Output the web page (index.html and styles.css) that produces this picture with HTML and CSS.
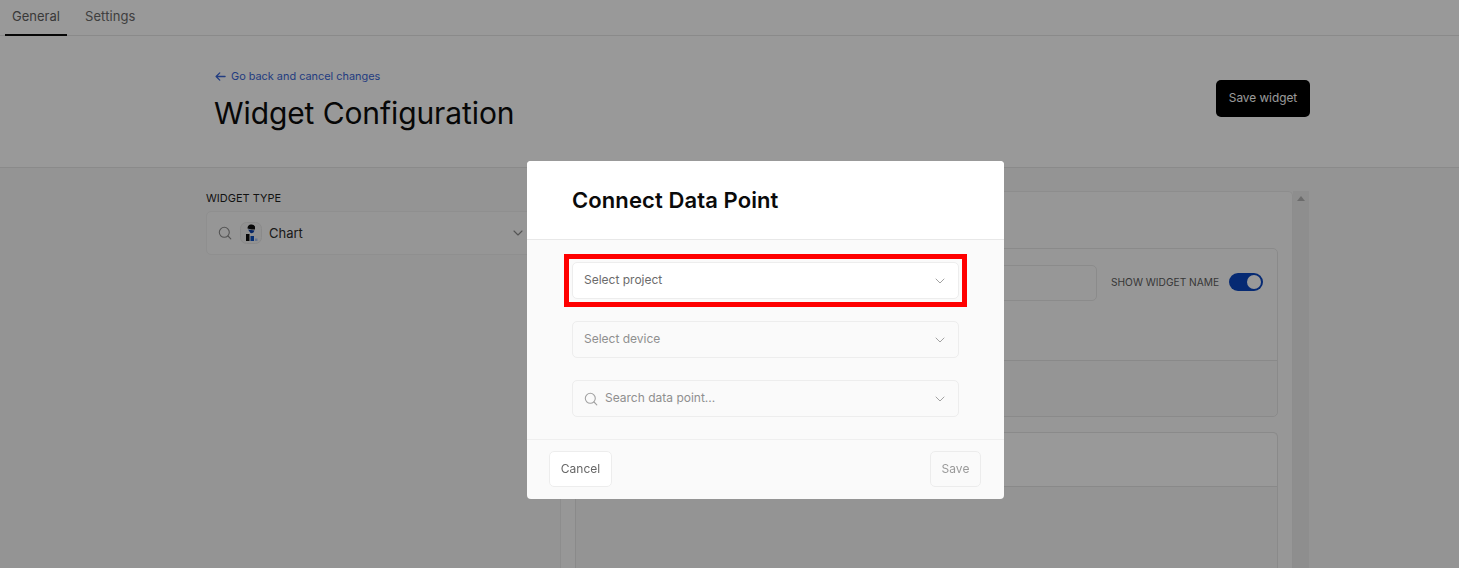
FILE: index.html
```html
<!DOCTYPE html>
<html lang="en">
<head>
<meta charset="utf-8">
<title>Widget Configuration</title>
<link rel="stylesheet" href="styles.css">
</head>
<body>
<div class="page">
  <nav class="tabs">
    <a class="tab tab-active">General</a>
    <a class="tab">Settings</a>
  </nav>
  <header class="head">
    <div class="head-left">
      <a class="back">
        <svg class="back-icon" viewBox="0 0 12 12" width="11" height="11"><path d="M11 6H1.2M5.200 2 1.200 6l4 4" fill="none" stroke="currentColor" stroke-width="1.400" stroke-linecap="round" stroke-linejoin="round"/></svg>
        Go back and cancel changes
      </a>
      <h1 class="title">Widget Configuration</h1>
    </div>
    <button class="btn-dark">Save widget</button>
  </header>
  <main class="content">
    <section class="left">
      <div class="label">WIDGET TYPE</div>
      <div class="type-select">
        <svg class="icon-search" viewBox="0 0 14 14" width="14" height="14"><circle cx="6.3" cy="6.3" r="5" fill="none" stroke="currentColor" stroke-width="1.1"/><path d="M10 10l2.8 2.8" stroke="currentColor" stroke-width="1.1" stroke-linecap="round"/></svg>
        <span class="type-icon">
          <svg viewBox="0 0 22 22" width="22" height="22"><rect x=".5" y=".5" width="21" height="21" rx="6" fill="#f4f4f4" stroke="#e6e6e6"/><path d="M7.500 6.500a4 4 0 0 1 7.500-2v3h-3.500z" fill="#0d0d0d"/><path d="M8 7.500l6.500 1a3.300 3.300 0 0 1-4 2.500z" fill="#0a3fa8"/><rect x="6" y="12" width="3.500" height="7" fill="#0d0d0d"/><rect x="10.500" y="14" width="3.500" height="5" fill="#0a4fc0"/><rect x="15" y="16.500" width="2.500" height="2.500" fill="#a9c4ee"/></svg>
        </span>
        <span class="type-name">Chart</span>
        <svg class="chev" viewBox="0 0 10 6" width="10" height="6"><path d="M1 1l4 4 4-4" fill="none" stroke="currentColor" stroke-width="1.1" stroke-linecap="round" stroke-linejoin="round"/></svg>
      </div>
    </section>
    <section class="right">
      <div class="panel">
        <div class="card card-a">
          <div class="card-row">
            <div class="name-input"></div>
            <span class="show-label">SHOW WIDGET NAME</span>
            <span class="toggle"><span class="knob"></span></span>
          </div>
          <div class="card-foot"></div>
        </div>
        <div class="card card-b">
          <div class="card-b-head"></div>
        </div>
      </div>
      <div class="scroll"><span class="scroll-up"></span></div>
    </section>
  </main>
</div>

<div class="overlay"></div>

<div class="modal">
  <div class="modal-head"><h2 class="modal-title">Connect Data Point</h2></div>
  <div class="modal-body">
    <div class="field field-on">
      <span class="field-text">Select project</span>
      <svg class="chev" viewBox="0 0 10 6" width="10" height="6"><path d="M1 1l4 4 4-4" fill="none" stroke="currentColor" stroke-width="1" stroke-linecap="round" stroke-linejoin="round"/></svg>
    </div>
    <div class="field">
      <span class="field-text">Select device</span>
      <svg class="chev" viewBox="0 0 10 6" width="10" height="6"><path d="M1 1l4 4 4-4" fill="none" stroke="currentColor" stroke-width="1" stroke-linecap="round" stroke-linejoin="round"/></svg>
    </div>
    <div class="field">
      <svg class="field-search" viewBox="0 0 14 14" width="14" height="14"><circle cx="6.300" cy="6.300" r="5" fill="none" stroke="currentColor" stroke-width="1.100"/><path d="M10 10l2.800 2.800" stroke="currentColor" stroke-width="1.100" stroke-linecap="round"/></svg>
      <span class="field-text">Search data point...</span>
      <svg class="chev" viewBox="0 0 10 6" width="10" height="6"><path d="M1 1l4 4 4-4" fill="none" stroke="currentColor" stroke-width="1" stroke-linecap="round" stroke-linejoin="round"/></svg>
    </div>
  </div>
  <div class="modal-foot">
    <button class="btn-light">Cancel</button>
    <button class="btn-off">Save</button>
  </div>
  <div class="highlight"></div>
</div>
</body>
</html>
```
FILE: styles.css
```css
* { box-sizing: border-box; }
html, body { margin: 0; height: 100%; overflow: hidden; }
body { font-family: Inter, "Liberation Sans", sans-serif; background: #f7f7f7; color: #111; }
.page { height: 568px; display: flex; flex-direction: column; overflow: hidden; }

.tabs { height: 36px; flex: none; display: flex; gap: 4px; padding-left: 5px; background: #fff; border-bottom: 1px solid #e6e6e6; }
.tab { height: 36px; padding: 8px 7px 0; font-size: 13px; line-height: 16px; color: #6a6a6a; letter-spacing: .1px; }
.tab:nth-child(2) { padding-left: 14px; }
.tab-active { color: #5f5f5f; letter-spacing: 0; width: 62px; border-bottom: 2px solid #0a0a0a; }

.head { height: 132px; flex: none; display: flex; justify-content: space-between; align-items: flex-start; padding: 33px 149px 0 214px; background: #fff; border-bottom: 1px solid #e6e6e6; }
.back { display: flex; align-items: center; gap: 5px; font-size: 10.900px; line-height: 14px; height: 14px; color: #3a66d6; padding-left: 1px; }
.back-icon { flex: none; }
.title { margin: 12px 0 0; font-size: 30px; line-height: 36px; font-weight: 400; letter-spacing: -.1px; color: #0c0c0c; white-space: nowrap; }
.btn-dark { width: 94px; height: 37px; margin-top: 11px; padding: 0 0 2px; border: 0; border-radius: 5px; background: #000; color: #fff; font: 400 11.800px/16px Inter, sans-serif; }

.content { flex: 1; min-height: 0; display: flex; padding: 23px 150px 0 206px; overflow: hidden; }
.left { width: 354px; flex: none; }
.label { font-size: 11px; line-height: 14px; color: #1e1e1e; margin-bottom: 6px; }
.type-select { height: 44px; width: 330px; display: flex; align-items: center; padding: 0 12px 0 11px; background: #fafafa; border: 1px solid #eee; border-radius: 5px; font-size: 13px; color: #333; }
.icon-search { color: #8c8c8c; flex: none; margin-right: 8px; }
.type-icon { display: flex; margin-right: 7px; }
.type-name { flex: 1; color: #2d2d2d; }
.chev { color: #8c8c8c; flex: none; }

.right { flex: 1; display: flex; min-width: 0; }
.panel { flex: 1; min-width: 0; height: 100%; overflow: hidden; border: 1px solid #ebebeb; border-bottom: 0; border-radius: 5px 5px 0 0; background: #fcfcfc; padding: 56px 14px 0 14px; }
.scroll { width: 16px; flex: none; background: #ededed; position: relative; }
.scroll-up { position: absolute; top: 5px; left: 4px; border: 4px solid transparent; border-top: 0; border-bottom: 5px solid #b5b5b5; }

.card { border: 1px solid #e6e6e6; border-radius: 5px; background: #fcfcfc; }
.card-a { height: 169px; display: flex; flex-direction: column; }
.card-row { height: 112px; flex: none; display: flex; padding-top: 16px; border-bottom: 1px solid #e4e4e4; }
.card-foot { flex: 1; background: #f8f8f8; border-radius: 0 0 5px 5px; }
.name-input { width: 521px; height: 36px; border: 1px solid #e8e8e8; border-radius: 5px; margin-right: 14px; flex: none; }
.show-label { font-size: 10.200px; line-height: 34px; color: #5d5d5d; white-space: nowrap; width: 118px; flex: none; }
.toggle { width: 34px; height: 18px; margin-top: 8px; border-radius: 9px; background: #0a46c0; position: relative; flex: none; }
.knob { position: absolute; top: 2px; right: 2px; width: 14px; height: 14px; border-radius: 50%; background: #fff; }
.card-b { margin-top: 15px; height: 136px; border-bottom: 0; border-radius: 5px 5px 0 0; background: #f7f7f7; }
.card-b-head { height: 54px; border-bottom: 1px solid #e4e4e4; background: #fff; border-radius: 5px 5px 0 0; }

.overlay { position: fixed; inset: 0; background: rgba(0, 0, 0, .4); }

.modal { position: absolute; left: 527px; top: 161px; width: 477px; height: 338px; display: flex; flex-direction: column; border-radius: 4px; background: #fafafa; }
.modal-head { height: 79px; flex: none; padding: 25px 0 0 45px; background: #fff; border-bottom: 1px solid #e8e8e8; border-radius: 4px 4px 0 0; }
.modal-title { margin: 0; font-size: 22px; line-height: 28px; font-weight: 600; letter-spacing: .1px; color: #0a0a0a; }
.modal-body { height: 200px; flex: none; padding: 22px 45px 0 45px; display: flex; flex-direction: column; gap: 22px; border-bottom: 1px solid #efefef; }
.field { height: 37px; flex: none; display: flex; align-items: center; padding: 0 13px 0 11px; border: 1px solid #ededed; border-radius: 5px; font-size: 12px; color: #8f8f8f; }
.field .chev, .field-search { color: #a2a2a2; }
.field-on { background: #fff; color: #6b6b6b; }
.field-text { flex: 1; padding-bottom: 2px; }
.field-search { flex: none; margin-right: 7px; }
.modal-foot { flex: 1; display: flex; justify-content: space-between; align-items: flex-start; padding: 11px 23px 0 22px; }
.btn-light, .btn-off { height: 36px; padding: 0; border-radius: 5px; font: 400 12px/16px Inter, sans-serif; }
.btn-light { width: 63px; background: #fff; border: 1px solid #ededed; color: #666; }
.btn-off { width: 51px; background: #fafafa; border: 1px solid #ececec; color: #9a9a9a; }
.highlight { position: absolute; left: 37px; top: 93px; width: 403px; height: 53px; border: 5px solid #ff0000; pointer-events: none; }
```
